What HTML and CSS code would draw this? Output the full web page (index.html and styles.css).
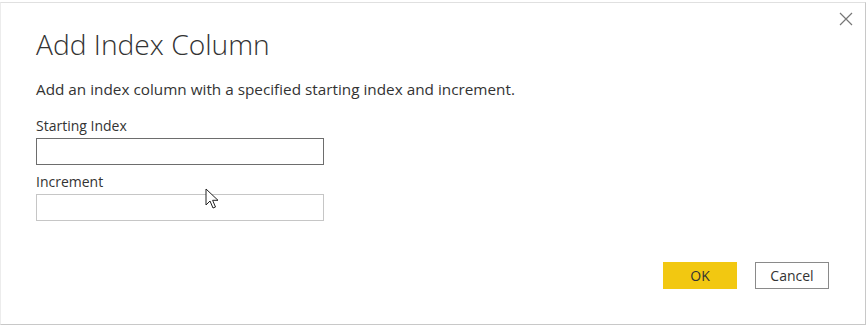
FILE: index.html
```html
<!DOCTYPE html>
<html>
<head>
<meta charset="utf-8">
<link rel="stylesheet" href="styles.css">
</head>
<body>
<div class="dialog">
  <button class="close" aria-label="Close">
    <svg width="14" height="14" viewBox="0 0 14 14"><path d="M1 1 L13 13 M13 1 L1 13" stroke="#777" stroke-width="1.2" fill="none"/></svg>
  </button>
  <h1 class="title">Add Index Column</h1>
  <p class="desc">Add an index column with a specified starting index and increment.</p>
  <label class="label">Starting Index</label>
  <div class="input active"></div>
  <label class="label second">Increment</label>
  <div class="input"></div>
  <div class="actions">
    <button class="btn ok">OK</button>
    <button class="btn cancel">Cancel</button>
  </div>
  <svg class="cursor" width="18" height="24" viewBox="0 0 18 24"><path d="M1 1 L1 17 L5 13 L8 20 L10.5 19 L7.6 12.3 L13 12.3 Z" fill="#fff" stroke="#222" stroke-width="1"/></svg>
</div>
</body>
</html>
```
FILE: styles.css
```css
html, body {
  margin: 0;
  padding: 0;
  background: #fff;
}
body {
  width: 867px;
  height: 326px;
  overflow: hidden;
  font-family: "Open Sans", "Noto Sans", sans-serif;
  color: #252423;
}
.dialog {
  position: relative;
  box-sizing: border-box;
  margin-top: 2px;
  width: 866px;
  height: 323px;
  border: 1px solid #c8c8c8;
  border-top-color: #e0e0e0;
  border-left-color: #ececec;
  padding: 22px 0 0 35px;
  display: flex;
  flex-direction: column;
}
.close {
  position: absolute;
  top: 9px;
  right: 12px;
  border: 0;
  background: transparent;
  padding: 0;
  width: 14px;
  height: 14px;
}
.close svg { display: block; }
.title {
  margin: 0;
  font-weight: 300;
  font-size: 28.2px;
  line-height: 38px;
  color: #333;
  letter-spacing: 0;
}
.desc {
  margin: 16px 0 0;
  font-size: 15.3px;
  line-height: 20px;
  color: #333;
}
.label {
  margin-top: 17px;
  font-size: 14px;
  line-height: 19px;
  color: #333;
}
.label.second { margin-top: 7px; }
.input {
  margin-top: 3px;
  box-sizing: border-box;
  width: 288px;
  height: 27px;
  border: 1px solid #c6c6c6;
  background: #fff;
}
.input.active {
  border-color: #6d6d6d;
}
.actions {
  margin-top: auto;
  margin-bottom: 35px;
  margin-right: 36px;
  display: flex;
  justify-content: flex-end;
  gap: 18px;
}
.btn {
  box-sizing: border-box;
  width: 74px;
  height: 27px;
  font-family: "Open Sans", "Noto Sans", sans-serif;
  font-size: 14px;
  color: #333;
  padding: 0;
}
.btn.ok {
  background: #f2c811;
  border: 1px solid #f2c811;
}
.btn.cancel {
  background: #fff;
  border: 1px solid #8a8a8a;
}
.cursor {
  position: absolute;
  left: 204px;
  top: 185px;
}
```
